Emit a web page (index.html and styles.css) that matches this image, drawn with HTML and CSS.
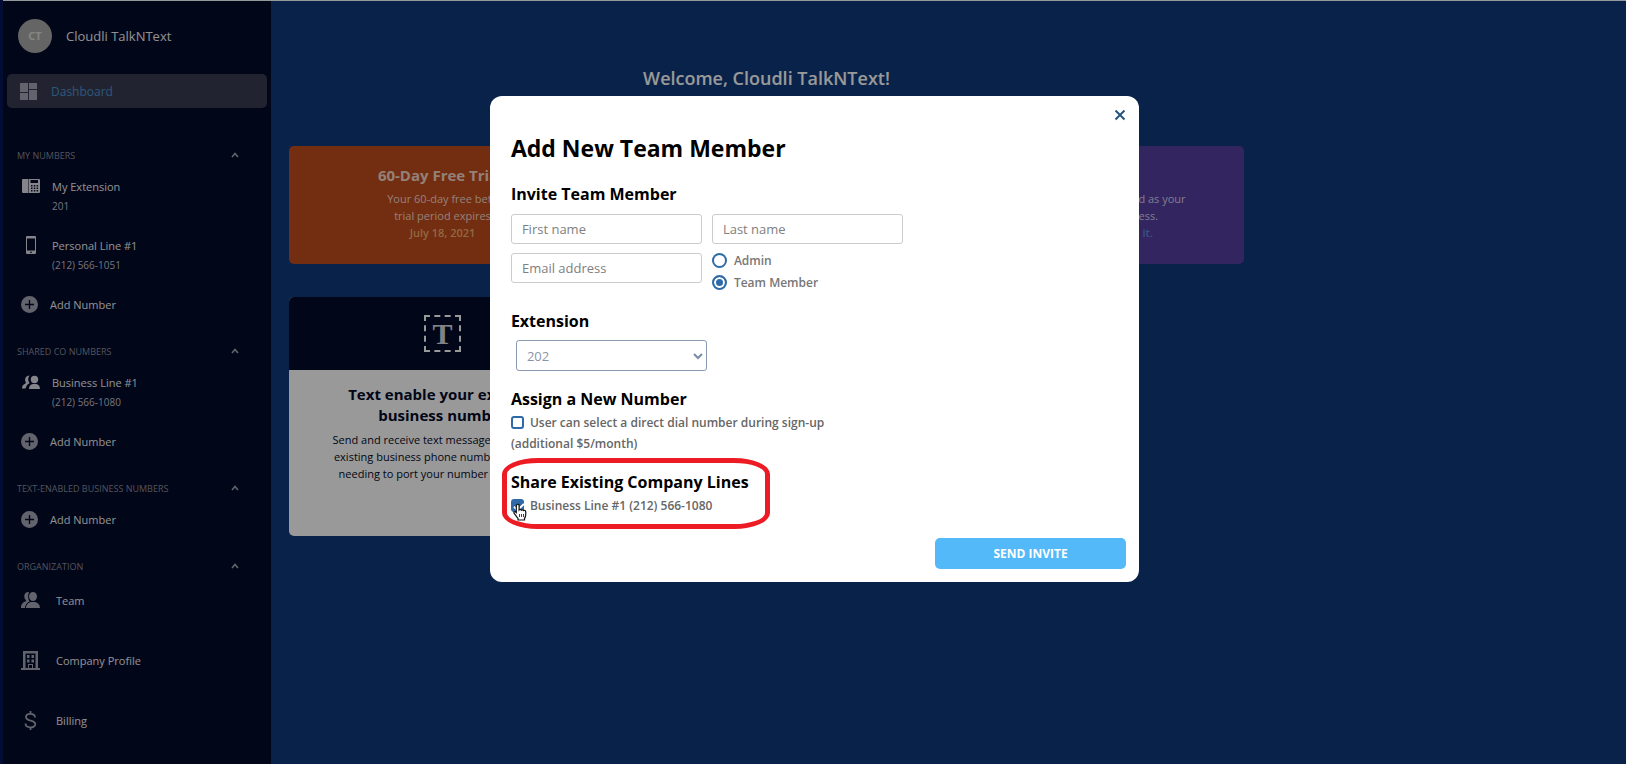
FILE: index.html
```html
<!DOCTYPE html>
<html lang="en">
<head>
  <meta charset="UTF-8" />
  <title>Dashboard - Cloudli TalkNText</title>
  <link rel="stylesheet" href="styles.css">
</head>
<body>

  <div class="page">
    <nav class="sidebar">
      <div class="account">
        <div class="avatar">CT</div>
        <div class="account-name">Cloudli TalkNText</div>
      </div>

      <a href="#dashboard" class="dashboard-link">
        <svg width="17" height="17" viewBox="0 0 17 17" fill="currentColor"><path d="M0 0h8v9H0zM0 10h8v7H0zM9 0h8v6H9zM9 7h8v10H9z"/></svg>
        Dashboard
      </a>

      <div class="section-head">
        <span>MY NUMBERS</span>
        <svg width="8" height="6" viewBox="0 0 8 6"><path d="M1 5l3-3.5L7 5" fill="none" stroke="currentColor" stroke-width="1.6"/></svg>
      </div>
      <a href="#extension" class="line-item">
        <svg class="bright" width="18" height="18" viewBox="0 0 18 18"><path fill="currentColor" fill-rule="evenodd" d="M1 2h5v14H1a1 1 0 0 1-1-1V3a1 1 0 0 1 1-1zM6.500 2H17a1 1 0 0 1 1 1v12a1 1 0 0 1-1 1H6.500zM8.500 3v3H16V3zM9 8v1.500h1.500V8zM11.800 8v1.500h1.500V8zM14.600 8v1.500h1.500V8zM9 10.500V12h1.500v-1.500zM11.800 10.500V12h1.500v-1.500zM14.600 10.500V12h1.500v-1.500zM9 13v1.500h1.500V13zM11.800 13v1.500h1.500V13zM14.600 13v1.500h1.500V13z"/></svg>
        <span class="line-text"><span>My Extension</span><small>201</small></span>
      </a>
      <a href="#personal" class="line-item">
        <svg class="bright" width="18" height="18" viewBox="0 0 18 18"><path fill="currentColor" fill-rule="evenodd" d="M5 0h8a1 1 0 0 1 1 1v16a1 1 0 0 1-1 1H5a1 1 0 0 1-1-1V1a1 1 0 0 1 1-1zM5 2.500v12h8v-12zM8 15.700v1h2v-1z"/></svg>
        <span class="line-text"><span>Personal Line #1</span><small>(212) 566-1051</small></span>
      </a>
      <a href="#add" class="add-item">
        <svg width="17" height="17" viewBox="0 0 17 17"><path fill="currentColor" fill-rule="evenodd" d="M8.500 0a8.500 8.500 0 1 1 0 17a8.500 8.500 0 0 1 0-17zM7.800 4v3.800H4v1.400h3.800V13h1.400V9.200H13V7.800H9.200V4z"/></svg>
        Add Number
      </a>

      <div class="section-head">
        <span>SHARED CO NUMBERS</span>
        <svg width="8" height="6" viewBox="0 0 8 6"><path d="M1 5l3-3.5L7 5" fill="none" stroke="currentColor" stroke-width="1.6"/></svg>
      </div>
      <a href="#business" class="line-item">
        <svg class="bright" width="18" height="18" viewBox="0 0 18 18" fill="currentColor"><circle cx="12.500" cy="6.500" r="3.700"/><path d="M7 16c0-3 1.500-4.800 4-5h3c2.500.2 4 2 4 5zM7.500 2.600C5.500 5 6 8 7.500 10.200L5 12 3.500 15.500H0c0-2.600 1-4 3.200-4.700L4 9.500C2 7 3.500 2.500 7.500 2.600z"/></svg>
        <span class="line-text"><span>Business Line #1</span><small>(212) 566-1080</small></span>
      </a>
      <a href="#add" class="add-item">
        <svg width="17" height="17" viewBox="0 0 17 17"><path fill="currentColor" fill-rule="evenodd" d="M8.500 0a8.500 8.500 0 1 1 0 17a8.500 8.500 0 0 1 0-17zM7.800 4v3.800H4v1.400h3.800V13h1.400V9.200H13V7.800H9.200V4z"/></svg>
        Add Number
      </a>

      <div class="section-head">
        <span>TEXT-ENABLED BUSINESS NUMBERS</span>
        <svg width="8" height="6" viewBox="0 0 8 6"><path d="M1 5l3-3.5L7 5" fill="none" stroke="currentColor" stroke-width="1.6"/></svg>
      </div>
      <a href="#add" class="add-item">
        <svg width="17" height="17" viewBox="0 0 17 17"><path fill="currentColor" fill-rule="evenodd" d="M8.500 0a8.500 8.500 0 1 1 0 17a8.500 8.500 0 0 1 0-17zM7.800 4v3.800H4v1.400h3.800V13h1.400V9.200H13V7.800H9.200V4z"/></svg>
        Add Number
      </a>

      <div class="section-head">
        <span>ORGANIZATION</span>
        <svg width="8" height="6" viewBox="0 0 8 6"><path d="M1 5l3-3.5L7 5" fill="none" stroke="currentColor" stroke-width="1.6"/></svg>
      </div>
      <div class="org-list">
        <a href="#team" class="org-item">
          <svg width="19" height="19" viewBox="0 0 19 19" fill="currentColor"><ellipse cx="12" cy="5.500" rx="4" ry="4.500"/><path d="M5 17c0-3.500 2.500-5.500 5-6h4c3 .5 5 2.500 5 6zM8 1C3.500.5 2.500 5 4 8c.5 1 1 1.500 1.500 2C2 11 0 13 0 17h4c0-3 1.500-5 4.500-6.500C7 8 6.500 4 8 1z"/></svg>
          Team
        </a>
        <a href="#company" class="org-item">
          <svg width="19" height="19" viewBox="0 0 19 19"><path fill="currentColor" fill-rule="evenodd" d="M2 0h15v17h2v2H0v-2h2zM4.500 2.500V17H7v-4h5v4h2.500V2.500zM6 4h2.500v3H6zM10.500 4H13v3h-2.500zM6 8.500h2.500v3H6zM10.500 8.500H13v3h-2.500zM8 14v3h3v-3z"/></svg>
          Company Profile
        </a>
        <a href="#billing" class="org-item">
          <svg width="19" height="19" viewBox="0 0 19 19"><path d="M9.500 0v3M9.500 16v3M14 6.500C14 1.500 5 2 5 6c0 4.800 9.300 2.300 9.300 7.200C14.300 17.500 4.500 17.500 4.500 12.500" fill="none" stroke="currentColor" stroke-width="1.800"/></svg>
          Billing
        </a>
      </div>
    </nav>

    <main class="content">
      <h1>Welcome, Cloudli TalkNText!</h1>
      <div class="cards">
        <section class="banner trial">
          <h2>60-Day Free Trial!</h2>
          <p>Your 60-day free beta<br>trial period expires<br><b>July 18, 2021</b></p>
        </section>
        <section class="banner number">
          <p>This number has been added as your<br>main line for the business.<br><a href="#change">Click here to manage it.</a></p>
        </section>
        <section class="feature">
          <div class="feature-top">
            <div class="text-icon">T</div>
          </div>
          <div class="feature-body">
            <h2>Text enable your existing<br>business number</h2>
            <p>Send and receive text messages using your<br>existing business phone numbers, without<br>needing to port your number to our line.</p>
          </div>
        </section>
      </div>
    </main>
  </div>

  <div class="overlay">
    <form class="modal">
      <button type="button" class="close" aria-label="Close">
        <svg width="12" height="12" viewBox="0 0 12 12"><path d="M1.500 1.500l9 9M10.500 1.500l-9 9" stroke="currentColor" stroke-width="2"/></svg>
      </button>
      <h2>Add New Team Member</h2>

      <h3>Invite Team Member</h3>
      <div class="fields">
        <input type="text" class="field" placeholder="First name" aria-label="First name">
        <input type="text" class="field" placeholder="Last name" aria-label="Last name">
        <input type="email" class="field" placeholder="Email address" aria-label="Email address">
        <div class="roles">
          <label><input type="radio" name="role">Admin</label>
          <label><input type="radio" name="role" checked>Team Member</label>
        </div>
      </div>

      <h3><label for="extension">Extension</label></h3>
      <div class="select-wrap">
        <select id="extension" class="field">
          <option>202</option>
        </select>
        <svg width="10" height="8" viewBox="0 0 10 8"><path d="M1 2l4 4 4-4" fill="none" stroke="currentColor" stroke-width="2"/></svg>
      </div>

      <h3>Assign a New Number</h3>
      <label class="check"><input type="checkbox">User can select a direct dial number during sign-up<br>(additional $5/month)</label>

      <div class="share">
        <h3>Share Existing Company Lines</h3>
        <label class="check"><input type="checkbox" checked>Business Line #1 (212) 566-1080</label>
        <div class="highlight"></div>
        <svg class="pointer" width="15" height="18" viewBox="0 0 15 18"><path d="M4 1.500c1.200-.6 2 0 2.100 1V7c.6-.8 1.700-.7 2.200.2.700-.7 1.800-.5 2.200.4.900-.5 2.100-.1 2.200 1 .3 3.300.1 5.300-1.200 6.900V17H5v-1.600C3.500 13.500 2.300 12 1 10.200c-.4-1.300.8-2.200 2.300-.7V2.500z" fill="#fff" stroke="#111" stroke-width="1.200"/><path d="M6.500 11v3M8.500 11v3M10.500 11v3" stroke="#111" stroke-width=".8"/></svg>
      </div>

      <button type="submit" class="send">SEND INVITE</button>
    </form>
  </div>

</body>
</html>
```
FILE: styles.css
```css
* {
  box-sizing: border-box;
}

body {
  margin: 0;
  background-color: #030d33;
  color: white;
  font-family: "Open Sans", "Noto Sans", sans-serif;
  font-size: 11px;
}

a {
  color: inherit;
  text-decoration: none;
}

h1, h2, h3, p {
  margin: 0;
}

.page {
  display: flex;
  min-height: 100vh;
  margin-left: 3px;
  border-top: 1px solid #96999c;
  background-color: #0f3a7b;
}

/* sidebar */

.sidebar {
  width: 268px;
  flex-shrink: 0;
  background-color: #030a28;
  color: #f0f0f5;
}

.sidebar svg {
  color: #a4a6b4;
  flex-shrink: 0;
}

.sidebar svg.bright {
  color: #dcdce6;
}

.account {
  display: flex;
  align-items: center;
  gap: 14px;
  padding: 18px 15px 0;
  font-size: 13px;
}

.avatar {
  width: 34px;
  height: 34px;
  border-radius: 50%;
  background-color: #a8a8a8;
  color: #e0e0e0;
  font-size: 11px;
  font-weight: bold;
  line-height: 34px;
  text-align: center;
}

.dashboard-link {
  display: flex;
  align-items: center;
  gap: 14px;
  height: 34px;
  margin: 21px 4px 37px;
  padding: 0 13px;
  border-radius: 5px;
  background-color: #3a3b52;
  color: #4a93cc;
  font-size: 12px;
}

.section-head {
  display: flex;
  align-items: center;
  justify-content: space-between;
  height: 20px;
  margin: 17px 32px 1px 14px;
  color: #8a8c9c;
  font-size: 9px;
}

.line-item {
  display: flex;
  gap: 12px;
  padding: 11px 19px 9px;
}

.line-text {
  display: flex;
  flex-direction: column;
  gap: 1px;
  line-height: 19px;
}

.line-text small {
  color: #c0c2d0;
  font-size: 10px;
}

.add-item {
  display: flex;
  align-items: center;
  gap: 12px;
  height: 40px;
  padding: 0 18px;
}

.org-list {
  display: flex;
  flex-direction: column;
  gap: 14px;
}

.org-item {
  display: flex;
  align-items: center;
  gap: 16px;
  height: 46px;
  padding: 0 18px;
}

/* dashboard */

.content {
  flex: 1;
  max-width: 991px;
  padding: 64px 18px 0;
}

h1 {
  font-size: 18px;
  font-weight: 600;
  line-height: 26px;
  text-align: center;
}

.cards {
  display: grid;
  grid-template-columns: repeat(3, 1fr);
  gap: 33px 17px;
  margin-top: 55px;
  text-align: center;
  line-height: 17px;
}

.banner {
  height: 118px;
  padding-top: 19px;
  border-radius: 5px;
}

.banner h2 {
  font-size: 15px;
  line-height: 20px;
  margin-bottom: 5px;
}

.trial {
  background-color: #c04b1c;
  color: #f5d8c8;
}

.trial b {
  color: #f0b070;
  font-weight: 600;
}

.number {
  grid-column: 3;
  padding-top: 44px;
  background-color: #553e9e;
  color: #d8d0f0;
}

.number a {
  color: #5a8ce0;
  font-weight: 600;
}

.feature {
  height: 239px;
  border-radius: 5px;
  background-color: white;
  color: #030a28;
  overflow: hidden;
}

.feature-top {
  display: flex;
  align-items: center;
  justify-content: center;
  height: 73px;
  background-color: #030a28;
}

.text-icon {
  width: 37px;
  height: 37px;
  border: 2px dashed white;
  color: #d8d8e0;
  font-family: "Liberation Serif", serif;
  font-size: 30px;
  font-weight: bold;
  line-height: 33px;
}

.feature-body {
  padding-top: 14px;
}

.feature-body h2 {
  margin-bottom: 5px;
  font-size: 15px;
  line-height: 21px;
}

/* add member dialog */

.overlay {
  position: fixed;
  inset: 1px 0 0 3px;
  display: flex;
  align-items: flex-start;
  justify-content: center;
  padding-top: 95px;
  background-color: rgba(0, 0, 0, 0.4);
}

.modal {
  position: relative;
  display: flex;
  flex-direction: column;
  width: 40%;
  min-width: 460px;
  padding: 36px 13px 13px 21px;
  border-radius: 12px;
  background-color: white;
  color: #666;
  font-size: 12px;
}

.modal h2 {
  margin-bottom: 19px;
  color: black;
  font-size: 23px;
  line-height: 32px;
}

.modal h3 {
  color: black;
  font-size: 16px;
  line-height: 22px;
}

.close {
  position: absolute;
  top: 13px;
  right: 13px;
  display: flex;
  padding: 0;
  border: none;
  background: none;
  color: #24567f;
  cursor: pointer;
}

.fields {
  display: grid;
  grid-template-columns: 191px 191px;
  gap: 9px 10px;
  margin: 9px 0 27px;
}

.field {
  width: 191px;
  height: 30px;
  padding: 0 10px;
  border: 1px solid #ccc;
  border-radius: 3px;
  background-color: white;
  color: #757575;
  font-family: inherit;
  font-size: 13px;
}

.field::placeholder {
  color: #808080;
}

.roles {
  height: 34px;
  margin-top: -4px;
}

.roles label {
  display: flex;
  align-items: center;
  gap: 7px;
  height: 22px;
  color: #777;
  font-weight: 600;
}

input[type="radio"], input[type="checkbox"] {
  appearance: none;
  flex-shrink: 0;
  width: 15px;
  height: 15px;
  margin: 0;
  border: 2px solid #2f6aa8;
  border-radius: 50%;
  background-color: white;
}

input[type="radio"]:checked {
  background-color: #2f6aa8;
  box-shadow: inset 0 0 0 2px white;
}

.select-wrap {
  position: relative;
  width: 191px;
  margin: 8px 0 17px 5px;
  color: #7a8ba8;
}

.select-wrap select {
  display: block;
  height: 31px;
  appearance: none;
  border-color: #8a9ab0;
  color: #8a94a8;
}

.select-wrap svg {
  position: absolute;
  top: 12px;
  right: 4px;
}

.check {
  display: block;
  padding-top: 2px;
  font-weight: 600;
  line-height: 21px;
}

.check input[type="checkbox"] {
  width: 13px;
  height: 13px;
  margin-right: 6px;
  border-radius: 3px;
  vertical-align: -2px;
}

.check input[type="checkbox"]:checked {
  background-color: #2f6aa8;
}

.check input[type="checkbox"]:checked::before {
  content: "";
  display: block;
  width: 4px;
  height: 8px;
  margin-left: 3px;
  border: solid white;
  border-width: 0 2px 2px 0;
  transform: rotate(45deg);
}

.share {
  position: relative;
  margin-top: 17px;
}

.highlight {
  position: absolute;
  top: -13px;
  left: -9px;
  width: 268px;
  height: 71px;
  border: 5px solid #ed1c24;
  border-radius: 36px / 16px;
}

.pointer {
  position: absolute;
  top: 32px;
  left: 2px;
}

.send {
  align-self: flex-end;
  width: 191px;
  height: 31px;
  margin-top: 22px;
  border: none;
  border-radius: 5px;
  background-color: #54b9f8;
  color: white;
  font-family: inherit;
  font-size: 12px;
  font-weight: bold;
  cursor: pointer;
}
```
